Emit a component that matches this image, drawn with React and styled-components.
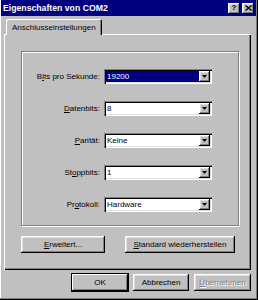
import React from 'react';
import styled, { createGlobalStyle } from 'styled-components';

const GlobalStyle = createGlobalStyle`
  html, body {
    margin: 0;
    padding: 0;
    background: #c0c0c0;
  }
  body {
    font-family: "Liberation Sans", Arial, sans-serif;
    font-size: 8px;
    color: #000;
  }
`;

const raised = `
  box-shadow: inset -1px -1px #000, inset 1px 1px #fff,
    inset -2px -2px #808080, inset 2px 2px #dfdfdf;
`;

const sunken = `
  box-shadow: inset 1px 1px #808080, inset 2px 2px #000,
    inset -1px -1px #fff, inset -2px -2px #dfdfdf;
`;

const Window = styled.div`
  width: 258px;
  height: 300px;
  box-sizing: border-box;
  padding: 0 2px 2px 1px;
  background: #c0c0c0;
  box-shadow: inset -1px -1px #000, inset -2px -2px #808080, inset 1px 0 #fff;
  display: flex;
  flex-direction: column;
`;

const TitleBar = styled.div`
  height: 16px;
  background: #000080;
  display: flex;
  align-items: center;
  justify-content: space-between;
  padding: 0 2px 0 2px;
`;

const Title = styled.span`
  color: #fff;
  font-weight: bold;
  font-size: 8.7px;
`;

const CaptionButtons = styled.div`
  display: flex;
  gap: 2px;
`;

const CaptionButton = styled.div`
  width: 12px;
  height: 11px;
  background: #c0c0c0;
  ${raised}
  display: flex;
  align-items: center;
  justify-content: center;
  font-weight: bold;
  font-size: 8px;
  line-height: 1;
`;

const Body = styled.div`
  padding: 3px 5px 0 3px;
  display: flex;
  flex-direction: column;
`;

const TabStrip = styled.div`
  display: flex;
  padding-left: 2px;
  position: relative;
  z-index: 1;
`;

const Tab = styled.div`
  height: 16px;
  margin-bottom: -1px;
  padding: 0 6px 0 6px;
  background: #c0c0c0;
  border-top-left-radius: 2px;
  border-top-right-radius: 2px;
  box-shadow: inset 1px 1px #fff, inset -1px 0 #000, inset -2px 0 #808080;
  display: flex;
  align-items: center;
`;

const Panel = styled.div`
  height: 236px;
  box-sizing: border-box;
  padding: 17px 12px 0 17px;
  box-shadow: inset 1px 1px #fff, inset -1px -1px #000, inset -2px -2px #808080;
  display: flex;
  flex-direction: column;
`;

const GroupBox = styled.div`
  height: 175px;
  box-sizing: border-box;
  border: 1px solid #808080;
  box-shadow: inset 1px 1px #fff, 1px 1px #fff;
  padding: 17px 0 0 1px;
  display: grid;
  grid-template-columns: 77px 108px;
  grid-auto-rows: 15px;
  column-gap: 4px;
  row-gap: 17px;
  align-content: start;
`;

const Label = styled.span`
  display: flex;
  align-items: center;
  justify-content: flex-end;
  white-space: nowrap;
`;

const Combo = styled.div`
  height: 15px;
  box-sizing: border-box;
  background: #fff;
  ${sunken}
  padding: 2px;
  display: flex;
`;

const Field = styled.div`
  flex: 1;
  display: flex;
  align-items: center;
  padding-left: 1px;
  background: ${(p) => (p.$selected ? '#000080' : '#fff')};
  color: ${(p) => (p.$selected ? '#fff' : '#000')};
`;

const DropButton = styled.div`
  width: 11px;
  background: #c0c0c0;
  ${raised}
  display: flex;
  align-items: center;
  justify-content: center;
`;

const ButtonRow = styled.div`
  display: flex;
  gap: 20px;
  margin-top: 10px;
`;

const Button = styled.div`
  width: ${(p) => p.$w}px;
  height: 17px;
  box-sizing: border-box;
  background: #c0c0c0;
  ${raised}
  display: flex;
  align-items: center;
  justify-content: center;
  white-space: nowrap;
  color: ${(p) => (p.$disabled ? '#808080' : '#000')};
  text-shadow: ${(p) => (p.$disabled ? '1px 1px #fff' : 'none')};
  ${(p) => p.$default && 'outline: 1px solid #000; outline-offset: 0; box-shadow: inset -1px -1px #000, inset 1px 1px #fff, inset -2px -2px #808080;'}
`;

const Footer = styled.div`
  display: flex;
  justify-content: flex-end;
  gap: 5px;
  margin-top: 4px;
`;

const Arrow = () => (
  <svg width="5" height="3" viewBox="0 0 5 3">
    <path d="M0 0h5L2.5 3z" fill="#000" />
  </svg>
);

const CloseIcon = () => (
  <svg width="7" height="6" viewBox="0 0 7 6">
    <path d="M0.5 0.5l6 5M6.5 0.5l-6 5" stroke="#000" strokeWidth="1.4" />
  </svg>
);

const rows = [
  { label: <>B<u>i</u>ts pro Sekunde:</>, value: '19200', selected: true },
  { label: <><u>D</u>atenbits:</>, value: '8' },
  { label: <><u>P</u>arität:</>, value: 'Keine' },
  { label: <>St<u>o</u>ppbits:</>, value: '1' },
  { label: <>Pr<u>o</u>tokoll:</>, value: 'Hardware' },
];

export default function App() {
  return (
    <>
      <GlobalStyle />
      <Window>
        <TitleBar>
          <Title>Eigenschaften von COM2</Title>
          <CaptionButtons>
            <CaptionButton>?</CaptionButton>
            <CaptionButton><CloseIcon /></CaptionButton>
          </CaptionButtons>
        </TitleBar>
        <Body>
          <TabStrip>
            <Tab>Anschlusseinstellungen</Tab>
          </TabStrip>
          <Panel>
            <GroupBox>
              {rows.map((r, i) => (
                <React.Fragment key={i}>
                  <Label>{r.label}</Label>
                  <Combo>
                    <Field $selected={r.selected}>{r.value}</Field>
                    <DropButton><Arrow /></DropButton>
                  </Combo>
                </React.Fragment>
              ))}
            </GroupBox>
            <ButtonRow>
              <Button $w={84}><u>E</u>rweitert...</Button>
              <Button $w={110}><u>S</u>tandard wiederherstellen</Button>
            </ButtonRow>
          </Panel>
          <Footer>
            <Button $w={56} $default>OK</Button>
            <Button $w={56}>Abbrechen</Button>
            <Button $w={57} $disabled><u>Ü</u>bernehmen</Button>
          </Footer>
        </Body>
      </Window>
    </>
  );
}
